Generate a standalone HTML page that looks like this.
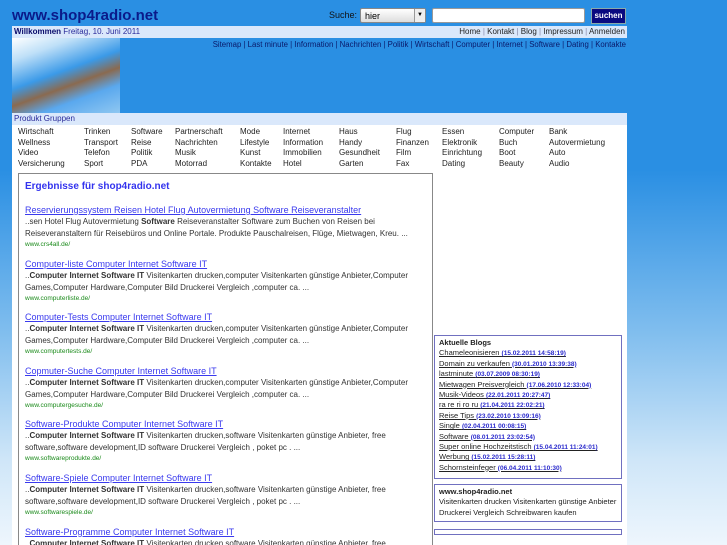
<!DOCTYPE html>
<html style="background:#eef6fd"><head><meta charset="utf-8"><style>
*{margin:0;padding:0;box-sizing:border-box}
html,body{width:727px;height:545px;overflow:hidden}
body{font-family:"Liberation Sans",sans-serif;background:linear-gradient(#2a8fe3 0px,#2a8fe3 170px,#7fbdee 330px,#cfe6f8 460px,#eef6fd 545px);position:relative}
.a{position:absolute}
#title{left:12px;top:7px;font-size:15px;font-weight:bold;color:#0a1a8a}
#suche{left:329px;top:10px;font-size:9px;color:#111}
#sel{left:360px;top:8px;width:66px;height:15px;background:linear-gradient(#fff,#ddd);border:1px solid #888;font-size:9px;padding:2px 4px;border-radius:2px}
#sel b{position:absolute;right:0;top:0;width:11px;height:13px;border-left:1px solid #999;background:#eee;font-size:6px;text-align:center;line-height:13px;font-weight:normal}
#inp{left:432px;top:8px;width:153px;height:15px;background:#fff;border:1px solid #999;border-radius:2px}
#btn{left:591px;top:8px;width:35px;height:16px;background:#0a0a80;border:1px solid #8aa;color:#fff;font-size:8px;font-weight:bold;text-align:center;line-height:14px}
#wel{left:12px;top:26px;width:615px;height:12px;background:#dae8fb;font-size:8px;color:#2a2a9a;padding:1px 2px}
#wel .r{position:absolute;right:2px;top:1px;color:#222}
#wel .r i{color:#88a;font-style:normal}
#img{left:12px;top:38px;width:108px;height:75px;background:linear-gradient(160deg,#fff 0%,#bfe0f8 20%,#3b9ae8 45%,#8a6a50 60%,#5aa8ee 75%,#8fc7f1 100%)}
#nav{right:101px;top:40px;font-size:7.8px;color:#0a1a6a}
#pg{left:12px;top:113px;width:615px;height:12px;background:#dae8fb;font-size:8px;color:#2a2a9a;padding:1px 2px}
#wh{left:12px;top:125px;width:615px;height:420px;background:#fff}
.c{position:absolute;font-size:8px;color:#222;line-height:10.6px}
#res{left:18px;top:173px;width:415px;height:380px;border:1px solid #888;padding:7px 6px}
h3{font-size:10px;color:#3333ee;margin-bottom:9px}
.t{font-size:9px;color:#3a3aee;text-decoration:underline;line-height:12px}
.s{font-size:8px;color:#333;line-height:12px}
.u{font-size:6.5px;color:#1a8a1a;line-height:9px;margin-bottom:8.6px}
.box{position:absolute;left:434px;width:188px;border:1px solid #7070c0;background:#fff;font-size:7.5px;padding:2px 4px;line-height:10.4px;color:#222}
.box a{display:block;height:10.4px;line-height:10.4px;color:#222;text-decoration:underline;white-space:nowrap}
.box a i{color:#2a2acc;font-style:normal;font-weight:bold;font-size:6.5px;line-height:10px}
</style></head><body>
<div class="a" id="title">www.shop4radio.net</div>
<div class="a" id="suche">Suche:</div>
<div class="a" id="sel">hier<b>▼</b></div>
<div class="a" id="inp"></div>
<div class="a" id="btn">suchen</div>
<div class="a" id="wel"><b style="color:#0a0a6a">Willkommen</b> Freitag, 10. Juni 2011<span class="r">Home <i>|</i> Kontakt <i>|</i> Blog <i>|</i> Impressum <i>|</i> Anmelden</span></div>
<div class="a" id="img"></div>
<div class="a" id="nav">Sitemap | Last minute | Information | Nachrichten | Politik | Wirtschaft | Computer | Internet | Software | Dating | Kontakte</div>
<div class="a" id="wh"></div>
<div class="a" id="pg">Produkt Gruppen</div>
<div class="c" style="left:18px;top:127px">Wirtschaft<br>Wellness<br>Video<br>Versicherung</div>
<div class="c" style="left:84px;top:127px">Trinken<br>Transport<br>Telefon<br>Sport</div>
<div class="c" style="left:131px;top:127px">Software<br>Reise<br>Politik<br>PDA</div>
<div class="c" style="left:175px;top:127px">Partnerschaft<br>Nachrichten<br>Musik<br>Motorrad</div>
<div class="c" style="left:240px;top:127px">Mode<br>Lifestyle<br>Kunst<br>Kontakte</div>
<div class="c" style="left:283px;top:127px">Internet<br>Information<br>Immobilien<br>Hotel</div>
<div class="c" style="left:339px;top:127px">Haus<br>Handy<br>Gesundheit<br>Garten</div>
<div class="c" style="left:396px;top:127px">Flug<br>Finanzen<br>Film<br>Fax</div>
<div class="c" style="left:442px;top:127px">Essen<br>Elektronik<br>Einrichtung<br>Dating</div>
<div class="c" style="left:499px;top:127px">Computer<br>Buch<br>Boot<br>Beauty</div>
<div class="c" style="left:549px;top:127px">Bank<br>Autovermietung<br>Auto<br>Audio</div>
<div class="a" id="res">
<h3>Ergebnisse für shop4radio.net</h3>
<div class="t" style="margin-top:12px">Reservierungssystem Reisen Hotel Flug Autovermietung Software Reiseveranstalter</div>
<div class="s">..sen Hotel Flug Autovermietung <b>Software</b> Reiseveranstalter Software zum Buchen von Reisen bei<br>Reiseveranstaltern für Reisebüros und Online Portale. Produkte Pauschalreisen, Flüge, Mietwagen, Kreu. ...</div>
<div class="u">www.crs4all.de/</div>
<div class="t">Computer-liste Computer Internet Software IT</div>
<div class="s">..<b>Computer Internet Software IT</b> Visitenkarten drucken,computer Visitenkarten günstige Anbieter,Computer<br>Games,Computer Hardware,Computer Bild Druckerei Vergleich ,computer ca. ...</div>
<div class="u">www.computerliste.de/</div>
<div class="t">Computer-Tests Computer Internet Software IT</div>
<div class="s">..<b>Computer Internet Software IT</b> Visitenkarten drucken,computer Visitenkarten günstige Anbieter,Computer<br>Games,Computer Hardware,Computer Bild Druckerei Vergleich ,computer ca. ...</div>
<div class="u">www.computertests.de/</div>
<div class="t">Copmuter-Suche Computer Internet Software IT</div>
<div class="s">..<b>Computer Internet Software IT</b> Visitenkarten drucken,computer Visitenkarten günstige Anbieter,Computer<br>Games,Computer Hardware,Computer Bild Druckerei Vergleich ,computer ca. ...</div>
<div class="u">www.computergesuche.de/</div>
<div class="t">Software-Produkte Computer Internet Software IT</div>
<div class="s">..<b>Computer Internet Software IT</b> Visitenkarten drucken,software Visitenkarten günstige Anbieter, free<br>software,software development,ID software Druckerei Vergleich , poket pc . ...</div>
<div class="u">www.softwareprodukte.de/</div>
<div class="t">Software-Spiele Computer Internet Software IT</div>
<div class="s">..<b>Computer Internet Software IT</b> Visitenkarten drucken,software Visitenkarten günstige Anbieter, free<br>software,software development,ID software Druckerei Vergleich , poket pc . ...</div>
<div class="u">www.softwarespiele.de/</div>
<div class="t">Software-Programme Computer Internet Software IT</div>
<div class="s">..<b>Computer Internet Software IT</b> Visitenkarten drucken,software Visitenkarten günstige Anbieter, free</div>
</div>
<div class="box" style="top:335px;height:144px"><b>Aktuelle Blogs</b><br>
<a>Chameleonisieren <i>(15.02.2011 14:58:19)</i></a>
<a>Domain zu verkaufen <i>(30.01.2010 13:39:38)</i></a>
<a>lastminute <i>(03.07.2009 08:30:19)</i></a>
<a>Mietwagen Preisvergleich <i>(17.06.2010 12:33:04)</i></a>
<a>Musik-Videos <i>(22.01.2011 20:27:47)</i></a>
<a>ra re ri ro ru <i>(21.04.2011 22:02:21)</i></a>
<a>Reise Tips <i>(23.02.2010 13:09:16)</i></a>
<a>Single <i>(02.04.2011 00:08:15)</i></a>
<a>Software <i>(08.01.2011 23:02:54)</i></a>
<a>Super online Hochzeitstisch <i>(15.04.2011 11:24:01)</i></a>
<a>Werbung <i>(15.02.2011 15:28:11)</i></a>
<a>Schornsteinfeger <i>(06.04.2011 11:10:30)</i></a></div>
<div class="box" style="top:484px;height:38px"><b>www.shop4radio.net</b><br>Visitenkarten drucken Visitenkarten günstige Anbieter<br>Druckerei Vergleich Schreibwaren kaufen</div>
<div class="box" style="top:529px;height:6px;padding:0"></div>
</body></html>
